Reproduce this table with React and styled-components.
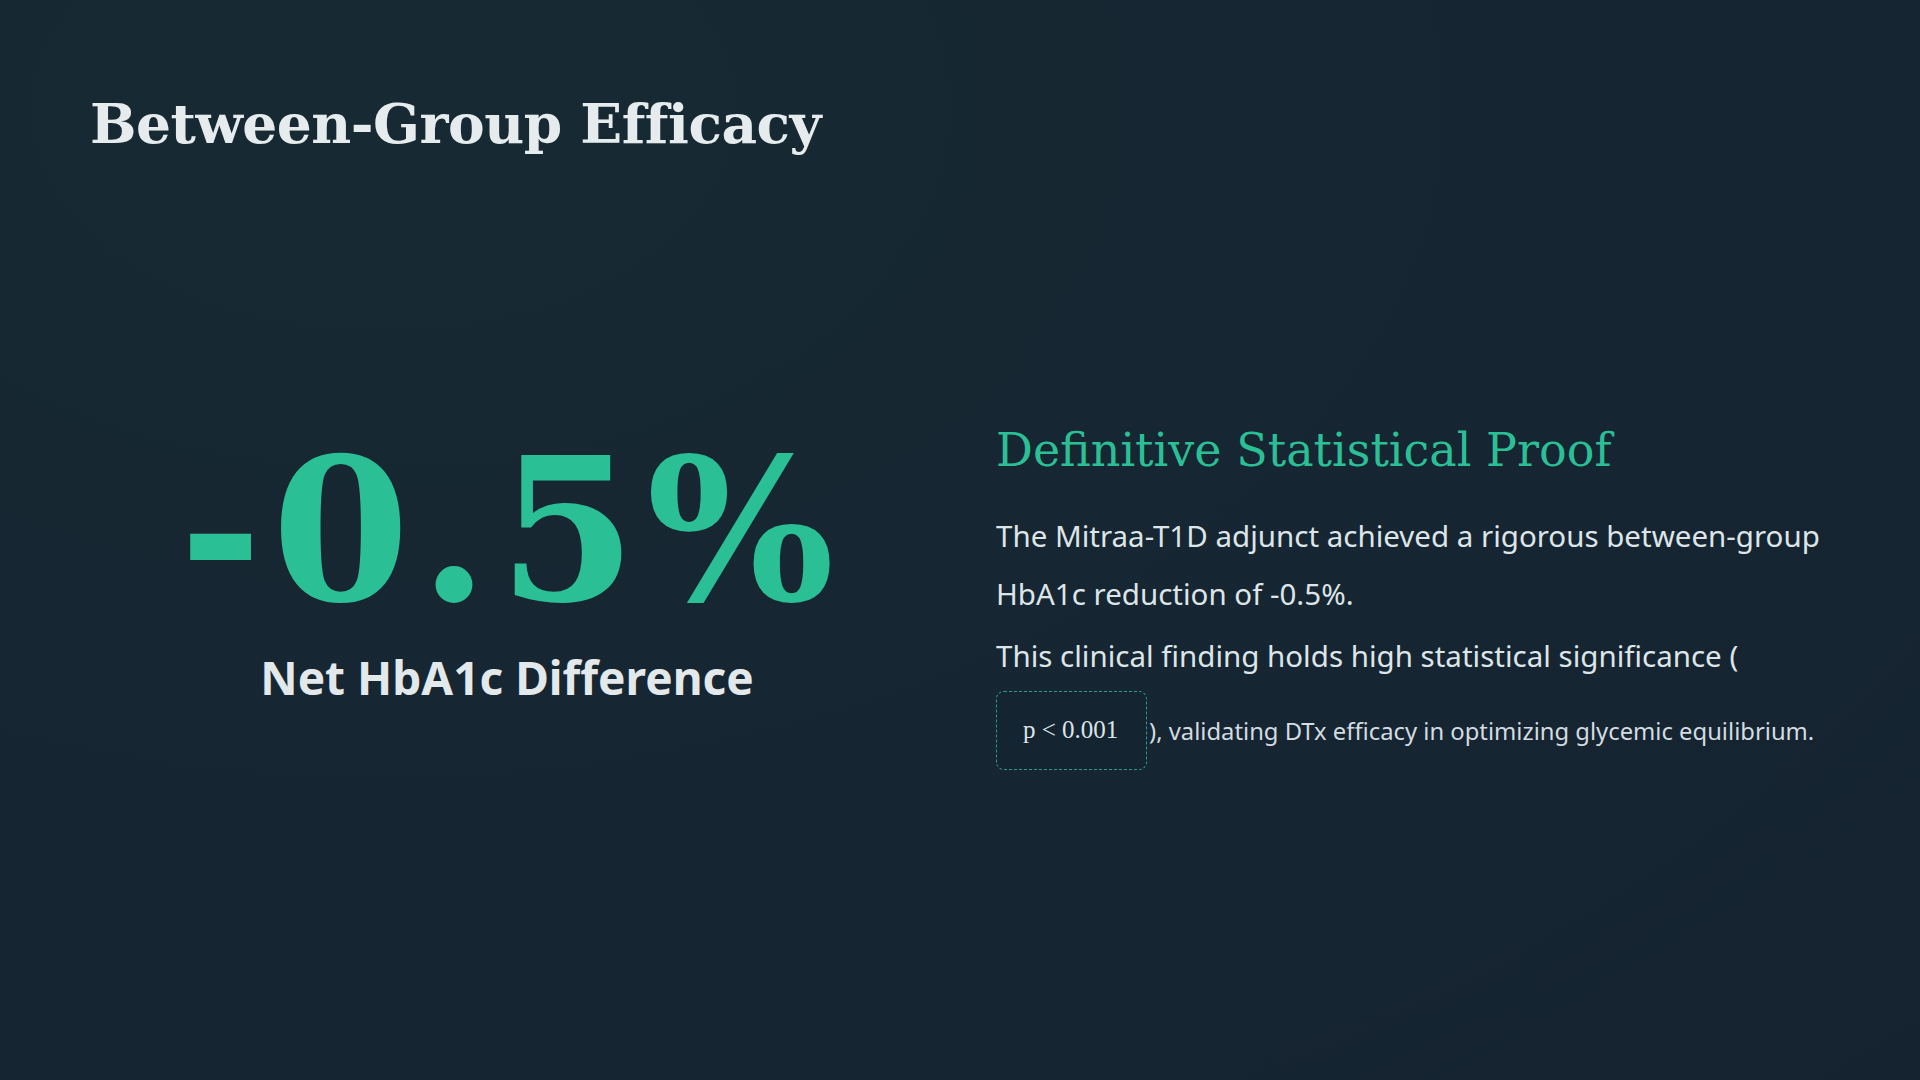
import React from 'react'
import styled, { createGlobalStyle } from 'styled-components'

const GlobalStyle = createGlobalStyle`
    html, body {
        margin: 0;
        padding: 0;
        background: #162632;
    }
    #root {
        min-height: 100vh;
    }
`
const Slide = styled.div`
    width: 1920px;
    height: 1080px;
    box-sizing: border-box;
    padding: 88px 90px 90px;
    display: flex;
    flex-direction: column;
    background: radial-gradient(ellipse at 20% 10%, #172a33 0%, #162632 45%, #14232f 100%);
    overflow: hidden;
`
const Title = styled.h1`
    margin: 0;
    font-family: "DejaVu Serif", "Liberation Serif", serif;
    font-weight: 700;
    font-size: 55px;
    line-height: 1.3;
    color: #e6ecee;
    letter-spacing: -0.5px;
`
const Body = styled.div`
    flex: 1;
    display: grid;
    grid-template-columns: 1fr 1fr;
    column-gap: 72px;
    align-items: center;
`
const StatColumn = styled.div`
    display: flex;
    flex-direction: column;
    align-items: center;
    margin-bottom: 10px;
`
const BigNumber = styled.div`
    font-family: "DejaVu Serif", "Liberation Serif", serif;
    font-weight: 700;
    font-size: 198px;
    line-height: 1;
    color: #2bbf96;
    letter-spacing: 10px;
    margin-right: -10px;
`
const StatLabel = styled.div`
    margin-top: 16px;
    font-family: "Noto Sans", "Liberation Sans", sans-serif;
    font-weight: 700;
    font-size: 46px;
    color: #e3e9eb;
`
const TextColumn = styled.div`
    display: flex;
    flex-direction: column;
    padding-top: 46px;
`
const Heading = styled.h2`
    margin: 0 0 26px;
    font-family: "DejaVu Serif", "Liberation Serif", serif;
    font-weight: 400;
    font-size: 46px;
    line-height: 1.3;
    color: #2bbf96;
`
const Paragraph = styled.p`
    margin: 0 0 4px;
    font-family: "Noto Sans", "Liberation Sans", sans-serif;
    font-size: 29.5px;
    line-height: 58px;
    color: #dde5e8;
`
const Small = styled.span`
    font-size: 23.8px;
    color: #d3dce0;
    vertical-align: -5px;
`
const PValue = styled.span`
    display: inline-block;
    vertical-align: middle;
    padding: 23px 27px 24px 26px;
    margin: 6px 2px 0 0;
    border: 1.5px dashed #2a9c82;
    border-radius: 8px;
    background: #142430;
    font-family: "Liberation Serif", "DejaVu Serif", serif;
    font-size: 25px;
    line-height: 30px;
    color: #dde5e8;
    min-width: 96px;
`

export default function App() {
    return (
        <>
            <GlobalStyle />
            <Slide>
                <Title>Between-Group Efficacy</Title>
                <Body>
                    <StatColumn>
                        <BigNumber>-0.5%</BigNumber>
                        <StatLabel>Net HbA1c Difference</StatLabel>
                    </StatColumn>
                    <TextColumn>
                        <Heading>Definitive Statistical Proof</Heading>
                        <Paragraph>The Mitraa-T1D adjunct achieved a rigorous between-group HbA1c reduction of -0.5%.</Paragraph>
                        <Paragraph>
                            This clinical finding holds high statistical significance (
                            <PValue>p &lt; 0.001</PValue>
                            <Small>), validating DTx efficacy in optimizing glycemic equilibrium.</Small>
                        </Paragraph>
                    </TextColumn>
                </Body>
            </Slide>
        </>
    )
}
